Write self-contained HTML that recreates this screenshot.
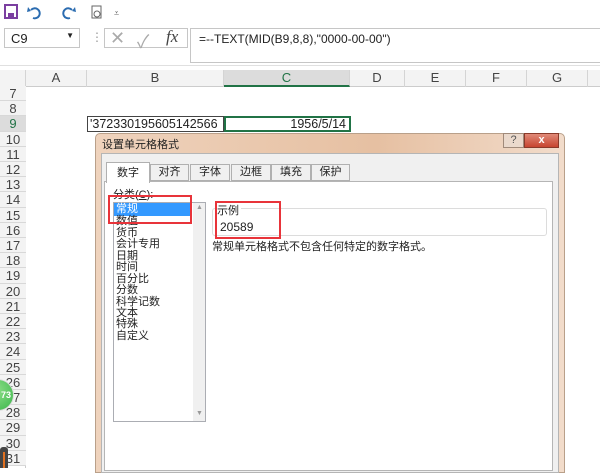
<!DOCTYPE html>
<html><head><meta charset="utf-8"><style>
*{margin:0;padding:0;box-sizing:border-box}
body{width:600px;height:468px;overflow:hidden;background:#fff;position:relative;font-family:"Liberation Sans","Noto Sans CJK SC",sans-serif;font-size:12px;color:#222}
.a{position:absolute}
.cjk{font-family:"Liberation Sans","Noto Sans CJK SC",sans-serif;font-size:11px}
.rh{position:absolute;left:0;width:26px;text-align:center;font-size:13px;color:#444;border-bottom:1px solid #d8d8d8;background:#f3f3f3}
.ch{position:absolute;top:70px;height:17px;text-align:center;font-size:13px;color:#444;border-right:1px solid #d4d4d4;line-height:16px}
.tab{position:absolute;top:164px;height:17px;border:1px solid #b0b0b0;background:#f0f0f0;text-align:center;line-height:15px}
.li{position:absolute;left:116px;line-height:12px}
</style></head><body>
<div class="a" style="left:0;top:0;width:600px;height:22px;background:#fff"></div>
<svg class="a" style="left:4px;top:4px" width="120" height="16">
<rect x="1" y="1" width="12" height="13" fill="none" stroke="#7b3fa0" stroke-width="2"/><rect x="4" y="9" width="6" height="4" fill="#7b3fa0"/>
<path d="M27 6 a5 5 0 1 1 2 8" fill="none" stroke="#2b6cb0" stroke-width="2"/><path d="M24 3 l3 4 l-4 1z" fill="#2b6cb0"/>
<path d="M68 6 a5 5 0 1 0 -2 8" fill="none" stroke="#2b6cb0" stroke-width="2"/><path d="M71 3 l-3 4 l4 1z" fill="#2b6cb0"/>
<rect x="88" y="2" width="9" height="12" fill="none" stroke="#666"/><circle cx="93" cy="10" r="3" fill="none" stroke="#666"/>
<text x="110" y="12" font-size="9" fill="#666">⩡</text></svg>
<div class="a" style="left:0;top:22px;width:600px;height:44px;background:#fff;border-bottom:1px solid #e0e0e0"></div>
<div class="a" style="left:4px;top:28px;width:76px;height:20px;border:1px solid #c6c6c6;padding:2px 6px;font-size:13px">C9<span style="position:absolute;right:5px;top:2px;font-size:8px">▼</span></div>
<div class="a" style="left:91px;top:30px;color:#999;font-size:12px">⋮</div>
<div class="a" style="left:104px;top:28px;width:84px;height:20px;border:1px solid #c6c6c6"></div>
<div class="a" style="left:110px;top:28px;font-size:18px;color:#aaa">✕</div>
<div class="a" style="left:137px;top:28px;font-size:18px;color:#aaa">✓</div>
<div class="a" style="left:166px;top:27px;font-family:'Liberation Serif';font-style:italic;font-size:17px;color:#444">fx</div>
<div class="a" style="left:190px;top:28px;width:412px;height:35px;border:1px solid #c6c6c6;padding:3px 8px;font-size:12px">=--TEXT(MID(B9,8,8),"0000-00-00")</div>
<div class="a" style="left:0;top:70px;width:600px;height:17px;background:#f3f3f3;border-bottom:1px solid #ccc"></div>
<div class="ch" style="left:0;width:26px"></div>
<div class="ch" style="left:26px;width:61px">A</div>
<div class="ch" style="left:87px;width:137px">B</div>
<div class="ch" style="left:224px;width:126px;background:#dcdcdc;color:#217346;border-bottom:2px solid #217346">C</div>
<div class="ch" style="left:350px;width:55px">D</div>
<div class="ch" style="left:405px;width:61px">E</div>
<div class="ch" style="left:466px;width:61px">F</div>
<div class="ch" style="left:527px;width:61px">G</div>
<div class="a" style="left:25px;top:87px;width:1px;height:381px;background:#ccc"></div>
<div id="rows"></div>
<script>
var h='';for(var r=7;r<=31;r++){var t=86+(r-7)*15.2;h+='<div class="rh" style="top:'+t+'px;height:15.2px;line-height:15px;'+(r==9?'background:#dcdcdc;color:#217346;':'')+'">'+r+'</div>';}
document.getElementById('rows').innerHTML=h;
</script>
<div class="a" style="left:87px;top:116px;width:137px;height:16px;border:1px solid #444;padding-left:2px;font-size:12.5px;line-height:14px">'372330195605142566</div>
<div class="a" style="left:224px;top:116px;width:127px;height:16px;border:2px solid #217346;text-align:right;padding-right:3px;font-size:12.5px;line-height:12px">1956/5/14</div>
<div class="a" style="left:95px;top:133px;width:470px;height:340px;background:linear-gradient(90deg,#efd3bd,#e6c0a2 60%,#f2dccb);border:1px solid #b9a08a;border-radius:5px 5px 0 0"></div>
<div class="a cjk" style="left:102px;top:136px">设置单元格格式</div>
<div class="a" style="left:503px;top:133px;width:21px;height:15px;background:#ead9cc;border:1px solid #a08a7a;text-align:center;font-size:11px;line-height:13px;color:#555">?</div>
<div class="a" style="left:524px;top:133px;width:35px;height:15px;background:linear-gradient(#e08a78,#c74530);border:1px solid #8a3a2a;text-align:center;color:#fff;font-weight:bold;font-size:11px;line-height:13px">x</div>
<div class="a" style="left:101px;top:153px;width:458px;height:320px;background:#f0f0f0;border:1px solid #b5b5b5"></div>
<div class="a" style="left:104px;top:181px;width:449px;height:290px;background:#fff;border:1px solid #b5b5b5"></div>
<div class="tab cjk" style="left:150px;width:39px">对齐</div>
<div class="tab cjk" style="left:190px;width:40px">字体</div>
<div class="tab cjk" style="left:231px;width:40px">边框</div>
<div class="tab cjk" style="left:271px;width:40px">填充</div>
<div class="tab cjk" style="left:311px;width:39px">保护</div>
<div class="tab cjk" style="left:106px;top:162px;width:44px;height:21px;background:#fff;border-bottom:none;line-height:20px">数字</div>
<div class="a cjk" style="left:113px;top:186px">分类(<u>C</u>):</div>
<div class="a" style="left:113px;top:202px;width:93px;height:220px;border:1px solid #abadb3;background:#fff"></div>
<div class="a" style="left:193px;top:203px;width:12px;height:218px;background:#f0f0f0"></div>
<div class="a" style="left:196px;top:204px;font-size:7px;color:#999">▲</div>
<div class="a" style="left:196px;top:410px;font-size:7px;color:#999">▼</div>
<div class="a" style="left:114px;top:203px;width:77px;height:13px;background:#3399ff"></div>
<div class="li cjk" style="top:203px;color:#fff">常规</div>
<div class="li cjk" style="top:215px">数值</div>
<div class="li cjk" style="top:227px">货币</div>
<div class="li cjk" style="top:238px">会计专用</div>
<div class="li cjk" style="top:250px">日期</div>
<div class="li cjk" style="top:261px">时间</div>
<div class="li cjk" style="top:273px">百分比</div>
<div class="li cjk" style="top:284px">分数</div>
<div class="li cjk" style="top:296px">科学记数</div>
<div class="li cjk" style="top:307px">文本</div>
<div class="li cjk" style="top:318px">特殊</div>
<div class="li cjk" style="top:330px">自定义</div>
<div class="a" style="left:212px;top:208px;width:335px;height:28px;border:1px solid #dcdcdc;border-radius:3px"></div>
<div class="a cjk" style="left:217px;top:202px;background:#fff;padding-right:2px">示例</div>
<div class="a" style="left:220px;top:220px;font-size:12px">20589</div>
<div class="a cjk" style="left:212px;top:238px">常规单元格格式不包含任何特定的数字格式。</div>
<div class="a" style="left:108px;top:195px;width:84px;height:29px;border:2px solid #e8343a"></div>
<div class="a" style="left:215px;top:201px;width:66px;height:38px;border:2px solid #e8343a"></div>
<div class="a" style="left:-18px;top:379px;width:32px;height:32px;border-radius:50%;background:radial-gradient(circle at 40% 35%,#8fe08a,#3bb54a);border:1px solid #ddd;color:#fff;font-size:9px;font-weight:bold;line-height:30px;text-align:right;padding-right:2px">73</div>
<div class="a" style="left:0;top:447px;width:8px;height:21px;background:#444;border-radius:3px 3px 0 0"></div>
<div class="a" style="left:3px;top:452px;width:2px;height:16px;background:#e07020"></div>
</body></html>
